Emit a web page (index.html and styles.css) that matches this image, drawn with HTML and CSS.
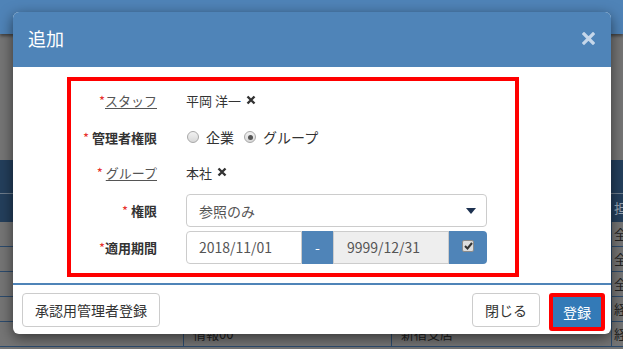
FILE: index.html
```html
<!DOCTYPE html>
<html lang="ja">
<head>
    <meta charset="UTF-8">
    <title>追加</title>
    <link rel="stylesheet" href="styles.css">
</head>
<body>
    <div class="navbar"></div>

    <div class="page">
        <div class="list">
            <div class="head head-top">
                <div></div><div></div><div></div><div></div>
            </div>
            <div class="head head-sub">
                <div></div><div></div><div></div><div>担</div>
            </div>
            <div class="row"><div></div><div></div><div></div><div>全</div></div>
            <div class="row"><div></div><div></div><div></div><div>全</div></div>
            <div class="row"><div></div><div></div><div></div><div>全</div></div>
            <div class="row"><div></div><div></div><div></div><div>経</div></div>
            <div class="row"><div></div><div>情報00</div><div>新宿支店</div><div>経</div></div>
        </div>
    </div>

    <div class="modal">
        <div class="modal-header">
            <h2>追加</h2>
            <svg class="close" width="13" height="13" viewBox="0 0 13 13">
                <path d="M2 2 L11 11 M11 2 L2 11" stroke="#c6d7ea" stroke-width="3.2" stroke-linecap="square"/>
            </svg>
        </div>

        <div class="modal-body">
            <div class="form-box">
                <div class="form-row r1">
                    <label class="link"><span class="req">*</span><u>スタッフ</u></label>
                    <div class="value">平岡 洋一
                        <svg class="remove" width="10" height="10" viewBox="0 0 10 10"><path d="M1.5 1.5 L8.5 8.5 M8.5 1.5 L1.5 8.5" stroke="#333" stroke-width="2.4"/></svg>
                    </div>
                </div>
                <div class="form-row r2">
                    <label class="strong"><span class="req">*</span> 管理者権限</label>
                    <div class="value">
                        <span class="radio"></span><span class="radio-text">企業</span>
                        <span class="radio checked"></span><span class="radio-text">グループ</span>
                    </div>
                </div>
                <div class="form-row r3">
                    <label class="link"><span class="req">*</span> <u>グループ</u></label>
                    <div class="value">本社
                        <svg class="remove" width="10" height="10" viewBox="0 0 10 10"><path d="M1.5 1.5 L8.5 8.5 M8.5 1.5 L1.5 8.5" stroke="#333" stroke-width="2.4"/></svg>
                    </div>
                </div>
                <div class="form-row r4">
                    <label class="strong"><span class="req">*</span> 権限</label>
                    <div class="select">
                        <span>参照のみ</span>
                        <svg width="10" height="6" viewBox="0 0 10 6"><path d="M0 0 H10 L5 6 Z" fill="#1d3150"/></svg>
                    </div>
                </div>
                <div class="form-row r5">
                    <label class="strong"><span class="req">*</span>適用期間</label>
                    <div class="date-group">
                        <div class="date-input">2018/11/01</div>
                        <div class="addon">-</div>
                        <div class="date-input readonly">9999/12/31</div>
                        <div class="addon last">
                            <span class="check">
                                <svg width="9" height="8" viewBox="0 0 9 8"><path d="M1 4 L3.5 6.5 L8 1" stroke="#333" stroke-width="2" fill="none"/></svg>
                            </span>
                        </div>
                    </div>
                </div>
            </div>
        </div>

        <div class="modal-footer">
            <button class="btn">承認用管理者登録</button>
            <div class="spacer"></div>
            <button class="btn">閉じる</button>
            <div class="highlight">
                <button class="btn btn-primary">登録</button>
            </div>
        </div>
    </div>
</body>
</html>
```

FILE: styles.css
```css
html {
    overflow: hidden;
}

body {
    margin: 0;
    padding: 0;
    height: 349px;
    overflow: hidden;
    background-color: #757575;
    font-family: "Noto Sans CJK JP", "Noto Sans", sans-serif;
    color: #333;
}

.navbar {
    height: 34px;
    background-color: #4f83b7;
    box-shadow: 0 2px 3px rgba(0, 0, 0, 0.45);
    position: relative;
}

.page {
    padding-top: 126px;
}

/* tabela atrás do modal */
.list .head,
.list .row {
    display: grid;
    grid-template-columns: 183px 208px 220px 1fr;
}

.list .head div,
.list .row div {
    white-space: nowrap;
    overflow: hidden;
}

.list .head {
    background-color: #243f5c;
    color: #9aa6b4;
    font-size: 13px;
}

.head-top {
    height: 33px;
    border-bottom: 1px solid #6d7c8c;
}

.head-sub {
    height: 28px;
    line-height: 28px;
}

.list .row {
    height: 24px;
    line-height: 24px;
    border-bottom: 1px solid #2c4b6d;
    font-size: 13px;
    color: #222;
}

.list .row div + div {
    border-left: 1px solid #2c4b6d;
    padding-left: 9px;
}

.list .row div:last-child {
    padding-left: 2px;
}

.list .head div + div {
    padding-left: 3px;
}

/* modal */
.modal {
    position: absolute;
    left: 13px;
    top: 12px;
    width: 598px;
    background-color: #fff;
    border-radius: 6px;
    overflow: hidden;
    box-shadow: 0 4px 14px rgba(0, 0, 0, 0.55);
}

.modal-header {
    height: 55px;
    background-color: #4f84b8;
    display: flex;
    align-items: center;
    justify-content: space-between;
    padding: 0 16px 0 15px;
}

.modal-header h2 {
    margin: -3px 0 0 0;
    color: #fff;
    font-size: 18px;
    font-weight: normal;
}

.close {
    margin-top: -3px;
}

.modal-body {
    padding: 10px 0 6px 54px;
}

.form-box {
    box-sizing: border-box;
    width: 452px;
    height: 200px;
    border: 4px solid #ff0000;
    padding-top: 4px;
}

.form-row {
    display: flex;
    align-items: center;
    height: 30px;
}

.form-row.r2 { margin-top: 7px; }
.form-row.r3 { margin-top: 5px; }
.form-row.r4 { margin-top: 7px; height: 33px; }
.form-row.r5 { margin-top: 4px; height: 33px; }

.form-row label {
    width: 86px;
    text-align: right;
    font-size: 13px;
    margin-right: 29px;
    flex-shrink: 0;
}

.form-row label.link {
    color: #555;
}

.form-row label.link u {
    text-decoration: underline;
    text-underline-offset: 2px;
}

.form-row label.strong {
    font-weight: bold;
    color: #333;
}

.req {
    color: #e8302c;
    font-weight: normal;
}

.value {
    font-size: 13px;
    color: #333;
    display: flex;
    align-items: center;
}

.remove {
    margin-left: 5px;
}

.radio {
    box-sizing: border-box;
    width: 12px;
    height: 12px;
    border-radius: 50%;
    border: 1px solid #a8a8a8;
    background: linear-gradient(#f2f2f2, #d8d8d8);
    margin-left: 1px;
    display: flex;
    align-items: center;
    justify-content: center;
}

.radio.checked::after {
    content: "";
    width: 5px;
    height: 5px;
    border-radius: 50%;
    background-color: #555;
}

.radio-text {
    margin: 0 9px 0 7px;
    font-size: 14px;
}

.select {
    box-sizing: border-box;
    width: 301px;
    height: 33px;
    border: 1px solid #ccc;
    border-radius: 4px;
    display: flex;
    align-items: center;
    justify-content: space-between;
    padding: 0 10px 0 12px;
    font-size: 14px;
    color: #555;
}

.date-group {
    display: flex;
    height: 33px;
    width: 301px;
}

.date-input {
    box-sizing: border-box;
    width: 116px;
    border: 1px solid #ccc;
    border-radius: 4px 0 0 4px;
    padding-left: 12px;
    font-size: 14px;
    color: #555;
    line-height: 31px;
}

.date-input.readonly {
    background-color: #eee;
    border-radius: 0;
    padding-left: 13px;
}

.addon {
    width: 31px;
    background-color: #4f84b8;
    color: #fff;
    font-size: 14px;
    text-align: center;
    line-height: 33px;
}

.addon.last {
    width: 38px;
    border-radius: 0 4px 4px 0;
    display: flex;
    align-items: center;
    justify-content: center;
}

.check {
    box-sizing: border-box;
    width: 12px;
    height: 12px;
    background-color: #ddd;
    border: 1px solid #8a8a8a;
    border-radius: 2px;
    display: flex;
    align-items: center;
    justify-content: center;
    margin-top: -4px;
}

.modal-footer {
    border-top: 2px solid #4f84b8;
    display: flex;
    align-items: flex-start;
    padding: 8px 6px 3px 9px;
}

.spacer {
    flex: 1;
}

.btn {
    box-sizing: border-box;
    height: 34px;
    padding: 0 12px;
    background-color: #fff;
    border: 1px solid #ccc;
    border-radius: 4px;
    font-family: "Noto Sans CJK JP", "Noto Sans", sans-serif;
    font-size: 14px;
    color: #333;
}

.highlight {
    margin-left: 9px;
    border: 4px solid #ff0000;
    border-radius: 3px;
    height: 30px;
}

.btn-primary {
    height: 30px;
    width: 48px;
    padding: 0;
    background-color: #337ab7;
    border: none;
    border-radius: 0;
    color: #fff;
}
```
